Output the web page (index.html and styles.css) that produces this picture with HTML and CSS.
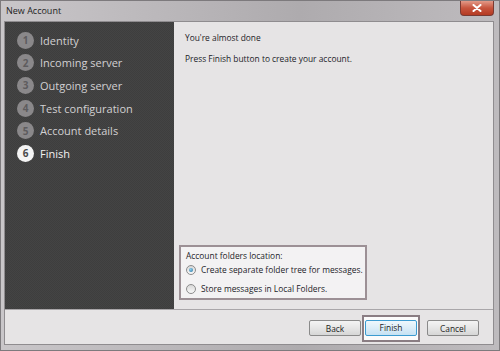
FILE: index.html
```html
<!DOCTYPE html>
<html lang="en">
<head>
  <meta charset="UTF-8">
  <title>New Account</title>
  <link rel="stylesheet" href="styles.css">
</head>
<body>
  <div class="window">
    <div class="titlebar">
      <span class="title">New Account</span>
      <span class="close-btn">
        <svg width="10" height="8" viewBox="0 0 10 8"><path d="M1.5 1 L8.5 7 M8.5 1 L1.5 7" stroke="#fff" stroke-width="2" stroke-linecap="round"/></svg>
      </span>
    </div>
    <div class="frame">
      <div class="main">
        <nav class="steps">
          <div class="step"><span class="num">1</span>Identity</div>
          <div class="step"><span class="num">2</span>Incoming server</div>
          <div class="step"><span class="num">3</span>Outgoing server</div>
          <div class="step"><span class="num">4</span>Test configuration</div>
          <div class="step"><span class="num">5</span>Account details</div>
          <div class="step active"><span class="num">6</span>Finish</div>
        </nav>
        <section class="page">
          <p>You're almost done</p>
          <p>Press Finish button to create your account.</p>
          <div class="spacer"></div>
          <div class="group">
            <div class="group-label">Account folders location:</div>
            <label class="radio"><span class="dot checked"></span>Create separate folder tree for messages.</label>
            <label class="radio"><span class="dot"></span>Store messages in Local Folders.</label>
          </div>
        </section>
      </div>
      <div class="footer">
        <button class="btn">Back</button>
        <span class="focus-ring"><button class="btn default">Finish</button></span>
        <button class="btn">Cancel</button>
      </div>
    </div>
  </div>
</body>
</html>
```

FILE: styles.css
```css
html, body {
  margin: 0;
  height: 100%;
}

body {
  font-family: 'Open Sans', 'Noto Sans', sans-serif;
  background: #b3afb2;
}

.window {
  width: 500px;
  height: 351px;
  display: flex;
  flex-direction: column;
  background: linear-gradient(90deg, #c9c6c9, #aeabae 60%, #bebbbe);
  box-sizing: border-box;
  border: 1px solid #7d7a7d;
}

.titlebar {
  height: 20px;
  display: flex;
  align-items: flex-start;
  justify-content: space-between;
  padding-left: 5px;
}

.title {
  font-size: 9px;
  color: #1e1e1e;
  line-height: 20px;
}

.close-btn {
  width: 34px;
  height: 15px;
  margin-right: 5px;
  display: flex;
  align-items: center;
  justify-content: center;
  background: linear-gradient(#e39a88, #c7553e 50%, #b43a22);
  border: 1px solid #7a3a32;
  border-top: none;
  border-radius: 0 0 4px 4px;
  box-sizing: border-box;
}

.frame {
  flex: 1;
  margin: 0 5px 5px 3px;
  display: flex;
  flex-direction: column;
  background: #e6e4e5;
  border: 1px solid #8f8c8f;
}

.main {
  height: 287px;
  display: flex;
  border-bottom: 1px solid #a9a6a9;
}

/* dark wizard step list with a fine checker texture */
.steps {
  width: 169px;
  padding-top: 7px;
  background-color: #444;
  background-image:
    linear-gradient(45deg, #3e3e3e 25%, transparent 25%, transparent 75%, #3e3e3e 75%),
    linear-gradient(45deg, #3e3e3e 25%, transparent 25%, transparent 75%, #3e3e3e 75%);
  background-size: 2px 2px;
  background-position: 0 0, 1px 1px;
  box-sizing: border-box;
}

.step {
  height: 22.6px;
  display: flex;
  align-items: center;
  gap: 6px;
  padding-left: 12px;
  font-size: 11px;
  color: #d2d0d2;
}

.num {
  width: 17px;
  height: 17px;
  border-radius: 50%;
  background: #8a888a;
  color: #5e5c5e;
  font-size: 10px;
  font-weight: bold;
  display: flex;
  align-items: center;
  justify-content: center;
}

.step.active {
  color: #f2f2f2;
}

.step.active .num {
  background: #f4f4f4;
  color: #4a4a4a;
}

.page {
  flex: 1;
  display: flex;
  flex-direction: column;
  padding: 10px 4px 9px 5px;
  font-size: 8.4px;
  color: #1c1c28;
}

.page p {
  margin: 0 0 9px 6px;
  line-height: 12px;
}

.spacer {
  flex: 1;
}

.group {
  width: 188px;
  height: 55px;
  box-sizing: border-box;
  border: 2px solid #9c9095;
  background: #f3f2f3;
  padding: 3px 0 0 5px;
  display: flex;
  flex-direction: column;
  white-space: nowrap;
}

.group-label {
  line-height: 11px;
  margin-bottom: 3px;
}

.radio {
  display: flex;
  align-items: center;
  gap: 5px;
  line-height: 12px;
  height: 12px;
  margin-bottom: 7px;
}

.dot {
  width: 8px;
  height: 8px;
  border-radius: 50%;
  border: 1px solid #8c8c8c;
  background: linear-gradient(#d8d8d8, #f8f8f8);
  display: flex;
  align-items: center;
  justify-content: center;
}

.dot.checked::after {
  content: "";
  width: 4px;
  height: 4px;
  border-radius: 50%;
  background: radial-gradient(circle at 40% 35%, #8fd0f0, #1f6f9c);
}

.footer {
  flex: 1;
  display: flex;
  align-items: center;
  justify-content: flex-end;
  padding: 2px 14px 0 0;
}

.btn {
  width: 52px;
  height: 16px;
  font-family: inherit;
  font-size: 8.4px;
  color: #222;
  border: 1px solid #8a8a8a;
  border-radius: 2px;
  background: linear-gradient(#f4f4f4, #e6e6e6 50%, #d6d6d6);
  padding: 0;
}

.focus-ring {
  display: flex;
  padding: 3px 1px 4px;
  border: 2px solid #8a7d83;
  background: #fbfbfb;
  margin: 0 7px 0 1px;
}

.btn.default {
  border-color: #3c9bd0;
  background: linear-gradient(#eef8fd, #dcedf8 50%, #c5e2f3);
}
```
